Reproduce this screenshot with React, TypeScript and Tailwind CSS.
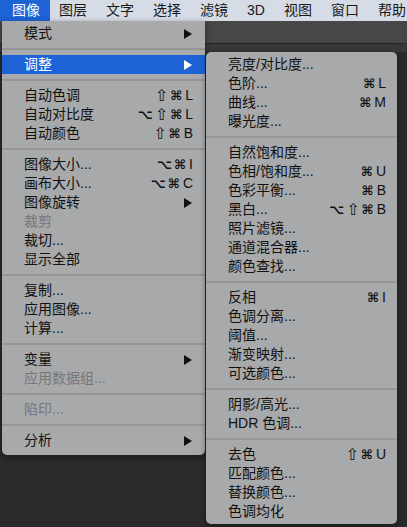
import React from "react";

type Item =
  | { sep: true }
  | {
      sep?: false;
      label: string;
      keys?: string;
      sub?: boolean;
      disabled?: boolean;
      active?: boolean;
    };

const imageMenu: Item[] = [
  { label: "模式", sub: true },
  { sep: true },
  { label: "调整", sub: true, active: true },
  { sep: true },
  { label: "自动色调", keys: "⇧⌘L" },
  { label: "自动对比度", keys: "⌥⇧⌘L" },
  { label: "自动颜色", keys: "⇧⌘B" },
  { sep: true },
  { label: "图像大小...", keys: "⌥⌘I" },
  { label: "画布大小...", keys: "⌥⌘C" },
  { label: "图像旋转", sub: true },
  { label: "裁剪", disabled: true },
  { label: "裁切..." },
  { label: "显示全部" },
  { sep: true },
  { label: "复制..." },
  { label: "应用图像..." },
  { label: "计算..." },
  { sep: true },
  { label: "变量", sub: true },
  { label: "应用数据组...", disabled: true },
  { sep: true },
  { label: "陷印...", disabled: true },
  { sep: true },
  { label: "分析", sub: true },
];

const adjustMenu: Item[] = [
  { label: "亮度/对比度..." },
  { label: "色阶...", keys: "⌘L" },
  { label: "曲线...", keys: "⌘M" },
  { label: "曝光度..." },
  { sep: true },
  { label: "自然饱和度..." },
  { label: "色相/饱和度...", keys: "⌘U" },
  { label: "色彩平衡...", keys: "⌘B" },
  { label: "黑白...", keys: "⌥⇧⌘B" },
  { label: "照片滤镜..." },
  { label: "通道混合器..." },
  { label: "颜色查找..." },
  { sep: true },
  { label: "反相", keys: "⌘I" },
  { label: "色调分离..." },
  { label: "阈值..." },
  { label: "渐变映射..." },
  { label: "可选颜色..." },
  { sep: true },
  { label: "阴影/高光..." },
  { label: "HDR 色调..." },
  { sep: true },
  { label: "去色", keys: "⇧⌘U" },
  { label: "匹配颜色..." },
  { label: "替换颜色..." },
  { label: "色调均化" },
];

const topMenus = ["图层", "文字", "选择", "滤镜", "3D", "视图", "窗口", "帮助"];

function Arrow({ white }: { white?: boolean }) {
  return (
    <svg width="8" height="10" viewBox="0 0 8 10" className="mr-[1px]">
      <polygon points="0,0 8,5 0,10" fill={white ? "#ffffff" : "#111111"} />
    </svg>
  );
}

function Keys({ keys }: { keys: string }) {
  return (
    <span className="flex items-center gap-[2px] text-[14px]">
      {keys.split("").map((k, i) =>
        /[A-Z]/.test(k) ? (
          <span key={i} className="ml-[1px] font-['Liberation_Sans',sans-serif]">
            {k}
          </span>
        ) : k === "⇧" ? (
          <span key={i} className="font-['DejaVu_Sans',sans-serif] text-[16px] leading-none">
            {k}
          </span>
        ) : (
          <span key={i} className="font-['DejaVu_Sans',sans-serif] text-[13px] font-bold">
            {k}
          </span>
        )
      )}
    </span>
  );
}

function Menu({ items, pr }: { items: Item[]; pr: string }) {
  return (
    <>
      {items.map((it, i) =>
        it.sep ? (
          <div key={i} className="flex h-[12px] items-center">
            <div className="h-[2px] w-full bg-[#959698]" />
          </div>
        ) : (
          <div
            key={i}
            className={`flex h-[19px] items-center justify-between whitespace-nowrap pl-[22px] ${pr} text-[14px] leading-[19px] ${
              it.active
                ? "bg-[#1d63d6] text-white"
                : it.disabled
                ? "text-[#76777a]"
                : "text-[#111111]"
            }`}
          >
            <span>{it.label}</span>
            {it.sub ? <Arrow white={it.active} /> : it.keys ? <Keys keys={it.keys} /> : null}
          </div>
        )
      )}
    </>
  );
}

export default function App() {
  return (
    <div className="relative h-[527px] w-[407px] overflow-hidden bg-[#2a2a2a] font-['Liberation_Sans','Noto_Sans_CJK_SC',sans-serif]">
      {/* menu bar */}
      <div className="flex h-[21px] items-stretch whitespace-nowrap bg-[#d5dce5] text-[14px] text-[#1a1a1a]">
        <div className="flex shrink-0 items-center bg-[#1d63d6] pl-[12px] pr-[9.5px] text-white">图像</div>
        {topMenus.map((m) => (
          <div key={m} className="flex shrink-0 items-center px-[9.5px]">
            {m}
          </div>
        ))}
      </div>
      {/* app chrome behind */}
      <div className="h-[23px] border-b border-[#262626] bg-[#474747]" />
      <div className="h-[8px] bg-[#383838]" />

      {/* image menu */}
      <div className="absolute left-[2px] top-[21px] w-[203px] rounded-b-[5px] bg-[#a8a9ab] pb-[5px] pt-[3px] shadow-[0_2px_6px_rgba(0,0,0,0.4)]">
        <Menu items={imageMenu} pr="pr-[12px]" />
      </div>

      {/* adjustments submenu */}
      <div className="absolute left-[206px] top-[52px] w-[191px] rounded-[5px] bg-[#a8a9ab] pb-[3px] pt-[3px] shadow-[0_2px_6px_rgba(0,0,0,0.4)]">
        <Menu items={adjustMenu} pr="pr-[11px]" />
      </div>
    </div>
  );
}
